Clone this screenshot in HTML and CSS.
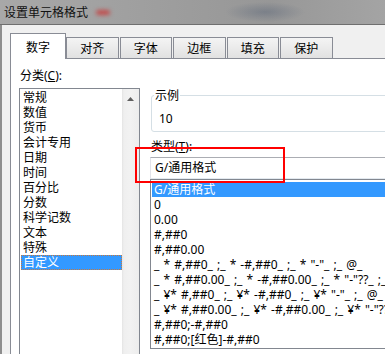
FILE: index.html
```html
<!DOCTYPE html>
<html lang="zh-CN">
<head>
<meta charset="utf-8">
<title>设置单元格格式</title>
<link rel="stylesheet" href="styles.css">
</head>
<body>
<div class="titlebar"><span class="title">设置单元格格式</span><span class="smudge"></span></div>
<div class="frame">
  <div class="tabs">
    <div class="tab active">数字</div>
    <div class="tab">对齐</div>
    <div class="tab">字体</div>
    <div class="tab">边框</div>
    <div class="tab">填充</div>
    <div class="tab">保护</div>
  </div>
  <div class="panel">
    <div class="left">
      <div class="label">分类(<u>C</u>):</div>
      <div class="catlist">
        <ul class="cat-items">
          <li>常规</li>
          <li>数值</li>
          <li>货币</li>
          <li>会计专用</li>
          <li>日期</li>
          <li>时间</li>
          <li>百分比</li>
          <li>分数</li>
          <li>科学记数</li>
          <li>文本</li>
          <li>特殊</li>
          <li class="sel focus">自定义</li>
        </ul>
        <div class="scroll"><svg class="arrow" width="7" height="4" viewBox="0 0 7 4"><polygon points="3.5,0 7,4 0,4" fill="#606060"/></svg></div>
      </div>
    </div>
    <div class="right">
      <div class="group">
        <div class="legend">示例</div>
        <div class="sample-val">10</div>
      </div>
      <div class="label type-label">类型(<u>T</u>):</div>
      <div class="input">G/通用格式</div>
      <ul class="typelist">
        <li class="sel">G/通用格式</li>
        <li>0</li>
        <li>0.00</li>
        <li>#,##0</li>
        <li>#,##0.00</li>
        <li>_ * #,##0_ ;_ * -#,##0_ ;_ * "-"_ ;_ @_ </li>
        <li>_ * #,##0.00_ ;_ * -#,##0.00_ ;_ * "-"??_ ;_ @_ </li>
        <li>_ ¥* #,##0_ ;_ ¥* -#,##0_ ;_ ¥* "-"_ ;_ @_ </li>
        <li>_ ¥* #,##0.00_ ;_ ¥* -#,##0.00_ ;_ ¥* "-"??_ ;_ @_ </li>
        <li>#,##0;-#,##0</li>
        <li>#,##0;[红色]-#,##0</li>
      </ul>
      <div class="redbox"></div>
    </div>
  </div>
</div>
</body>
</html>
```
FILE: styles.css
```css
* { box-sizing: border-box; margin: 0; padding: 0; }
html, body { width: 385px; height: 354px; overflow: hidden; }
body {
  font-family: "Noto Sans", "Noto Sans CJK SC", sans-serif;
  font-size: 12px;
  color: #000;
  background: #f0f0f0;
}
.titlebar {
  height: 25px;
  border-bottom: 1px solid #6f6f6f;
  background:
    radial-gradient(ellipse 40px 10px at 265px 12px, rgba(70, 85, 110, 0.35), rgba(70, 85, 110, 0)),
    linear-gradient(to right, #a8a8a8, #9d9d9d 45%, #979797 70%, #a4a4a4);
  display: flex;
  align-items: center;
  padding-left: 4px;
}
.title {
  font-family: "Noto Sans CJK SC", sans-serif;
  font-size: 12px;
  line-height: 24px;
  color: #111;
}
.smudge {
  width: 14px;
  height: 5px;
  margin-left: 8px;
  background: #c24a4a;
  border-radius: 3px;
  filter: blur(2px);
}
.frame {
  border-left: 2px solid #8e8e8e;
  padding: 8px 0 0 8px;
  height: 329px;
}
.tabs {
  display: flex;
  align-items: flex-end;
  height: 25px;
}
.tab {
  width: 52.5px;
  height: 21px;
  margin-left: 1px;
  border: 1px solid #898c95;
  border-bottom: 0;
  background: linear-gradient(#f4f4f4, #e1e1e1);
  display: flex;
  align-items: center;
  justify-content: center;
  font-family: "Noto Sans CJK SC", sans-serif;
  line-height: 1;
}
.tab.active {
  width: 56px;
  height: 26px;
  margin-left: 0;
  margin-bottom: -1px;
  background: #fff;
  position: relative;
  z-index: 1;
}
.tab.active + .tab { margin-left: 0; }
.panel {
  border-left: 1px solid #898c95;
  border-top: 1px solid #898c95;
  background: #fff;
  display: flex;
  height: 300px;
  padding-left: 8px;
}
.label {
  line-height: 15px;
  margin-left: 1px;
}
.left .label { margin-top: 9px; }
.catlist {
  margin-top: 5px;
  width: 121px;
  height: 280px;
  border: 1px solid #828790;
  display: flex;
}
.cat-items {
  width: 102px;
  padding-top: 1px;
  list-style: none;
}
li {
  height: 15px;
  line-height: 15px;
  margin-left: 1px;
  padding-left: 2px;
  white-space: pre;
}
li.sel { background: #3399ff; color: #fff; }
li.focus { outline: 1px dotted #c8783a; outline-offset: -1px; }
.scroll {
  width: 17px;
  background: linear-gradient(to right, #e4e4e4, #efefef 2px, #f2f2f2 50%, #ededed);
  display: flex;
  justify-content: center;
}
.arrow { margin-top: 8px; }
.right {
  margin-left: 10px;
  width: 260px;
  position: relative;
}
.group {
  margin: 36px 0 0 1px;
  height: 37px;
  border: 1px solid #d5dfe5;
  border-radius: 3px;
}
.legend {
  width: fit-content;
  margin: -8px 0 0 2px;
  padding: 0 1px;
  background: #fff;
  line-height: 15px;
}
.sample-val {
  margin-top: 8px;
  padding-left: 7px;
  line-height: 15px;
}
.type-label { margin-top: 7px; }
.input {
  margin-top: 3px;
  height: 22px;
  border: 1px solid #e2e3ea;
  border-top-color: #abadb3;
  border-bottom-color: #e3e9ef;
  padding-left: 4px;
  line-height: 20px;
}
.typelist {
  height: 170px;
  border: 1px solid #828790;
  padding-top: 2px;
  list-style: none;
  overflow: hidden;
  word-spacing: 1px;
}
.redbox {
  position: absolute;
  left: -15px;
  top: 88px;
  width: 150px;
  height: 36px;
  border: 2px solid #ff0000;
}
```
